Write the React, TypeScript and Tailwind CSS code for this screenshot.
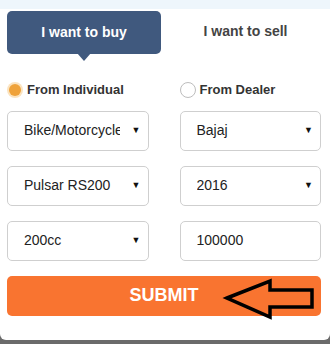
import React from "react";

type Field = { value: string; select: boolean };

const rows: Field[][] = [
  [
    { value: "Bike/Motorcycle", select: true },
    { value: "Bajaj", select: true },
  ],
  [
    { value: "Pulsar RS200", select: true },
    { value: "2016", select: true },
  ],
  [
    { value: "200cc", select: true },
    { value: "100000", select: false },
  ],
];

const FieldBox: React.FC<{ field: Field }> = ({ field }) => (
  <div className="h-[40px] rounded-[5px] border border-[#cfcfcf] bg-white flex items-center pl-[16px] pr-[7px]">
    <div className="flex-1 overflow-hidden whitespace-nowrap text-[14px] text-[#222]">
      <span className="block w-[96px] overflow-hidden">{field.value}</span>
    </div>
    {field.select && <span className="text-[9px] text-[#111]">▼</span>}
  </div>
);

const Radio: React.FC<{ checked?: boolean; label: string }> = ({ checked, label }) => (
  <div className="flex items-center gap-[4px]">
    {checked ? (
      <span className="w-[16px] h-[16px] rounded-full bg-[#fbe3bf] flex items-center justify-center">
        <span className="w-[12px] h-[12px] rounded-full bg-[#efa23a]" />
      </span>
    ) : (
      <span className="w-[16px] h-[16px] rounded-full border border-[#bdbdbd] bg-white" />
    )}
    <span className="text-[13px] font-bold text-[#333]">{label}</span>
  </div>
);

export default function App() {
  return (
    <div className="w-[330px] h-[344px] bg-[#6b6b6b] font-['Liberation_Sans',Arial,sans-serif] flex flex-col">
      <div className="bg-white rounded-b-[6px] h-[340px] flex flex-col">
        <div className="h-[9px] bg-[#eef6fc]" />

        {/* tabs */}
        <div className="flex pl-[7px] pt-[2px]">
          <div className="relative w-[154px] h-[43px] rounded-[5px] bg-[#40597e] flex items-center justify-center text-white text-[14px] font-bold">
            I want to buy
            <span className="absolute left-[70px] top-[42px] w-0 h-0 border-l-[7px] border-r-[7px] border-t-[8px] border-l-transparent border-r-transparent border-t-[#40597e]" />
          </div>
          <div className="flex-1 flex justify-center pt-[10px] text-[14px] font-bold text-[#444]">I want to sell</div>
        </div>

        {/* radios */}
        <div className="grid grid-cols-2 gap-x-[31px] pl-[7px] pr-[9px] mt-[26px]">
          <Radio checked label="From Individual" />
          <Radio label="From Dealer" />
        </div>

        {/* fields */}
        <div className="grid grid-cols-2 gap-x-[31px] gap-y-[15px] pl-[7px] pr-[9px] mt-[11px]">
          {rows.flat().map((f, i) => (
            <FieldBox key={i} field={f} />
          ))}
        </div>

        <div className="relative ml-[7px] mr-[9px] mt-[15px] h-[40px] rounded-[5px] bg-[#f97430] flex items-center justify-center text-white text-[18px] font-bold">
          SUBMIT
          <svg className="absolute left-0 top-0" width="314" height="44" viewBox="7 276 314 44">
            <polygon
              points="227,298 270,281 270,290 312,290 312,307 270,307 270,317"
              fill="none"
              stroke="#000"
              strokeWidth="3.5"
              strokeLinejoin="miter"
            />
          </svg>
        </div>
      </div>
    </div>
  );
}
